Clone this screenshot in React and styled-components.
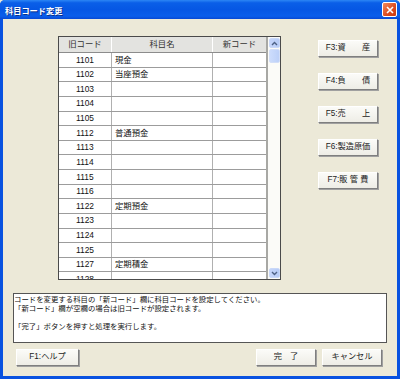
import React from "react";
import styled, { createGlobalStyle } from "styled-components";

const Global = createGlobalStyle`
  html, body { margin: 0; padding: 0; background: #ECE9D8; }
  body { font-family: "Liberation Sans", "Noto Sans CJK JP", sans-serif; }
  * { box-sizing: border-box; }
`;

const Frame = styled.div`
  width: 400px;
  height: 379px;
  display: flex;
  flex-direction: column;
  background: #0952E0;
  border-radius: 5px 5px 0 0;
  overflow: hidden;
`;

const TitleBar = styled.div`
  height: 19px;
  flex: none;
  display: flex;
  align-items: center;
  justify-content: space-between;
  padding: 0 3px 0 5px;
  background: linear-gradient(#2C86F5 0%, #0A5FE8 15%, #0657E4 50%, #0A5EEB 85%, #0749D4 100%);
`;

const Title = styled.span`
  color: #fff;
  font-family: "Noto Sans CJK JP", sans-serif;
  font-weight: 700;
  font-size: 8.2px;
  text-shadow: 1px 1px 0 #0A2F8A;
`;

const CloseBtn = styled.div`
  width: 15px;
  height: 15px;
  border: 1px solid #fff;
  border-radius: 2px;
  background: linear-gradient(135deg, #F08A5E, #DC4A1E 60%, #C93A12);
  display: flex;
  align-items: center;
  justify-content: center;
`;

const Client = styled.div`
  flex: 1;
  margin: 0 3px 3px;
  background: #ECE9D8;
  display: flex;
  flex-direction: column;
`;

const TopSection = styled.div`
  display: flex;
  align-items: flex-start;
  padding: 17px 0 0 55px;
`;

const TableBox = styled.div`
  width: 223px;
  height: 244px;
  border: 1px solid #4A4A4A;
  background: #fff;
  display: flex;
`;

const GridArea = styled.div`
  width: 209px;
  overflow: hidden;
  border-right: 2px solid #A8A8A4;
`;

const Row = styled.div`
  display: grid;
  grid-template-columns: 53px 101px 53px;
  height: ${(p) => (p.$header ? "16px" : "14.63px")};
  background: ${(p) => (p.$header ? "#E3E3E0" : "#fff")};
  border-bottom: 1px solid ${(p) => (p.$header ? "#8C8C8C" : "#9C9C9C")};
`;

const Cell = styled.div`
  border-right: 1px solid ${(p) => (p.$header ? "#FFFFFF" : "#B0B0B0")};
  font-size: 8.4px;
  color: ${(p) => (p.$header ? "#333" : "#111")};
  display: flex;
  align-items: center;
  justify-content: ${(p) => (p.$left ? "flex-start" : "center")};
  padding-left: ${(p) => (p.$left ? "3px" : "0")};
  white-space: nowrap;
  line-height: 1;
  &:last-child { border-right: none; }
`;

const ScrollBar = styled.div`
  width: 12px;
  display: flex;
  flex-direction: column;
  background: #FBFBF8;
  padding: 1px 0 1px 1px;
`;

const ArrowBtn = styled.div`
  height: 10px;
  flex: none;
  background: linear-gradient(90deg, #C6D6FB, #B6CBF6);
  border: 1px solid #C9D8F8;
  border-radius: 2px;
  display: flex;
  align-items: center;
  justify-content: center;
`;

const Thumb = styled.div`
  height: 14px;
  margin-top: 1px;
  background: linear-gradient(90deg, #CCDCFC, #BCD0F8);
  border: 1px solid #D2DEF8;
  border-radius: 2px;
`;

const Track = styled.div`
  flex: 1;
`;

const SideButtons = styled.div`
  display: flex;
  flex-direction: column;
  gap: 16px;
  margin-left: 37px;
  padding-top: 4px;
`;

const Button = styled.div`
  width: ${(p) => p.$w || 60}px;
  height: 17px;
  background: linear-gradient(#FBFBF8, #EEEDE6);
  border: 1px solid;
  border-color: #FFFFFF #7F7F7F #7F7F7F #FFFFFF;
  box-shadow: 1px 1px 0 #A0A0A0;
  display: flex;
  align-items: center;
  justify-content: center;
  font-size: 8.2px;
  color: #222;
  white-space: pre;
  line-height: 1;
`;

const MessageBox = styled.div`
  margin: 13px 10px 0 10px;
  height: 50px;
  background: #fff;
  border: 1px solid #555;
  font-family: "Noto Sans CJK JP", sans-serif;
  font-size: 7.4px;
  line-height: 9px;
  color: #111;
`;

const MsgLine = styled.div`
  height: 9px;
  white-space: nowrap;
  overflow: visible;
`;

const BottomBar = styled.div`
  display: flex;
  align-items: center;
  gap: 6px;
  margin-top: 6px;
  padding: 0 15px 0 13px;
`;

const Spacer = styled.div`
  flex: 1;
`;

const rows = [
  ["1101", "現金"],
  ["1102", "当座預金"],
  ["1103", ""],
  ["1104", ""],
  ["1105", ""],
  ["1112", "普通預金"],
  ["1113", ""],
  ["1114", ""],
  ["1115", ""],
  ["1116", ""],
  ["1122", "定期預金"],
  ["1123", ""],
  ["1124", ""],
  ["1125", ""],
  ["1127", "定期積金"],
  ["1128", ""],
];

const Chevron = ({ down }) => (
  <svg width="7" height="5" viewBox="0 0 7 5">
    <path
      d={down ? "M1 1 L3.5 3.5 L6 1" : "M1 4 L3.5 1.5 L6 4"}
      fill="none"
      stroke="#4D6185"
      strokeWidth="1.4"
    />
  </svg>
);

export default function App() {
  return (
    <>
      <Global />
      <Frame>
        <TitleBar>
          <Title>科目コード変更</Title>
          <CloseBtn>
            <svg width="8" height="8" viewBox="0 0 8 8">
              <path d="M1 1 L7 7 M7 1 L1 7" stroke="#fff" strokeWidth="1.6" />
            </svg>
          </CloseBtn>
        </TitleBar>
        <Client>
          <TopSection>
            <TableBox>
              <GridArea>
                <Row $header>
                  <Cell $header>旧コード</Cell>
                  <Cell $header>科目名</Cell>
                  <Cell $header>新コード</Cell>
                </Row>
                {rows.map(([code, name]) => (
                  <Row key={code}>
                    <Cell>{code}</Cell>
                    <Cell $left>{name}</Cell>
                    <Cell />
                  </Row>
                ))}
              </GridArea>
              <ScrollBar>
                <ArrowBtn>
                  <Chevron />
                </ArrowBtn>
                <Thumb />
                <Track />
                <ArrowBtn>
                  <Chevron down />
                </ArrowBtn>
              </ScrollBar>
            </TableBox>
            <SideButtons>
              <Button>{"F3:資　　産"}</Button>
              <Button>{"F4:負　　債"}</Button>
              <Button>{"F5:売　　上"}</Button>
              <Button>{"F6:製造原価"}</Button>
              <Button>{"F7:販 管 費"}</Button>
            </SideButtons>
          </TopSection>
          <MessageBox>
            <MsgLine>コードを変更する科目の「新コード」欄に科目コードを設定してください。</MsgLine>
            <MsgLine>「新コード」欄が空欄の場合は旧コードが設定されます。</MsgLine>
            <MsgLine />
            <MsgLine>「完了」ボタンを押すと処理を実行します。</MsgLine>
          </MessageBox>
          <BottomBar>
            <Button $w={63}>F1:ヘルプ</Button>
            <Spacer />
            <Button>{"完　了"}</Button>
            <Button>キャンセル</Button>
          </BottomBar>
        </Client>
      </Frame>
    </>
  );
}
